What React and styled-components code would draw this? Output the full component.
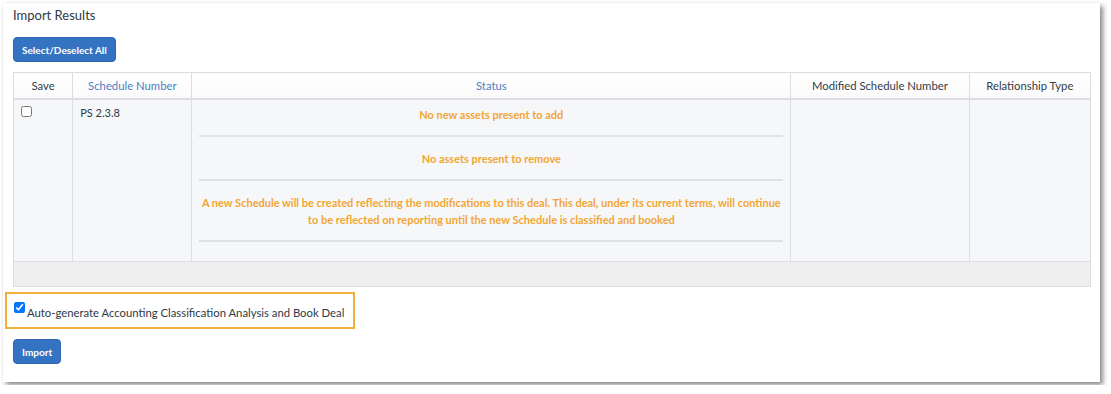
import React, { useState } from "react";
import styled, { createGlobalStyle } from "styled-components";

const GlobalStyle = createGlobalStyle`
    body {
        margin: 0;
        background: #ffffff;
        font-family: Lato, "Open Sans", Arial, sans-serif;
        color: #333d47;
    }
`;

const Card = styled.section`
    margin: 3px;
    width: 1097px;
    height: 379px;
    box-sizing: border-box;
    padding: 3px 9px 0 10px;
    background: #ffffff;
    box-shadow: 3px 3px 5px rgba(0, 0, 0, 0.45), 0 0 2px rgba(0, 0, 0, 0.08);
`;

const Title = styled.h3`
    margin: 0;
    font-size: 13px;
    font-weight: 400;
    line-height: 18px;
    color: #2e3a46;
`;

const Button = styled.button`
    display: block;
    height: 25px;
    padding: 0 8px;
    margin-top: ${(p) => p.$top}px;
    border: 1px solid #2b66b1;
    border-radius: 4px;
    background: #3473c2;
    color: #ffffff;
    font-family: Lato, Arial, sans-serif;
    font-size: 10px;
    font-weight: 700;
    cursor: pointer;
`;

const Table = styled.table`
    margin-top: 10px;
    width: 1078px;
    border-collapse: collapse;
    border: 1px solid #dcdee1;
    font-size: 11px;
`;

const Th = styled.th`
    height: 25px;
    padding: 0 6px;
    border: 1px solid #dcdee1;
    border-bottom-width: 2px;
    background: linear-gradient(#ffffff, #fafafa);
    font-size: 11.3px;
    font-weight: 400;
    text-align: center;
    color: ${(p) => (p.$link ? "#4a7fc3" : "#333d47")};
`;

const Td = styled.td`
    vertical-align: top;
    padding: 4px 6px;
    border: 1px solid #dcdee1;
    background: #f6f7f9;
    line-height: 17px;
`;

const StatusCell = styled(Td)`
    padding: 6px 7px 19px;
`;

const FooterCell = styled.td`
    height: 24px;
    padding: 0;
    background: #efefef;
    border: 1px solid #dcdee1;
`;

const StatusItem = styled.div`
    padding: ${(p) => (p.$first ? "0" : "13px")} 0 12px;
    border-bottom: 2px solid #dfe1e4;
    text-align: center;
    color: #f2a635;
    font-size: 11px;
    font-weight: 700;
    line-height: 17px;
`;

const RowCheck = styled.input`
    margin: 1px 0 0 1px;
    width: 11px;
    height: 11px;
`;

const NumberText = styled.div`
    padding-left: 1px;
    color: #2e3a46;
`;

const AutoBox = styled.label`
    display: flex;
    align-items: flex-start;
    gap: 2px;
    box-sizing: border-box;
    width: 350px;
    height: 37px;
    margin: 5px 0 0 -8px;
    padding: 7px 7px;
    border: 2px solid #f0b03a;
    font-size: 11.3px;
    line-height: 18px;
    white-space: nowrap;
    color: #2e3a46;
    cursor: pointer;

    input {
        margin: 1px 0 0;
        width: 11px;
        height: 11px;
    }
    span {
        margin-top: 3px;
    }
`;

const columns = [
    { label: "Save", width: 59 },
    { label: "Schedule Number", width: 119, link: true },
    { label: "Status", width: 597, link: true },
    { label: "Modified Schedule Number", width: 178 },
    { label: "Relationship Type", width: 121 },
];

const statuses = [
    "No new assets present to add",
    "No assets present to remove",
    "A new Schedule will be created reflecting the modifications to this deal. This deal, under its current terms, will continue to be reflected on reporting until the new Schedule is classified and booked",
];

export default function App() {
    const [save, setSave] = useState(false);
    const [auto, setAuto] = useState(true);

    return (
        <>
            <GlobalStyle />
            <Card>
                <Title>Import Results</Title>
                <Button $top={13} onClick={() => setSave(!save)}>
                    Select/Deselect All
                </Button>
                <Table>
                    <colgroup>
                        {columns.map((c) => (
                            <col key={c.label} style={{ width: c.width }} />
                        ))}
                    </colgroup>
                    <thead>
                        <tr>
                            {columns.map((c) => (
                                <Th key={c.label} $link={c.link}>
                                    {c.label}
                                </Th>
                            ))}
                        </tr>
                    </thead>
                    <tbody>
                        <tr>
                            <Td>
                                <RowCheck
                                    type="checkbox"
                                    checked={save}
                                    onChange={(e) => setSave(e.target.checked)}
                                />
                            </Td>
                            <Td>
                                <NumberText>PS 2.3.8</NumberText>
                            </Td>
                            <StatusCell>
                                {statuses.map((s, i) => (
                                    <StatusItem key={i} $first={i === 0}>
                                        {s}
                                    </StatusItem>
                                ))}
                            </StatusCell>
                            <Td />
                            <Td />
                        </tr>
                        <tr>
                            <FooterCell colSpan={5} />
                        </tr>
                    </tbody>
                </Table>
                <AutoBox>
                    <input
                        type="checkbox"
                        checked={auto}
                        onChange={(e) => setAuto(e.target.checked)}
                    />
                    <span>Auto-generate Accounting Classification Analysis and Book Deal</span>
                </AutoBox>
                <Button $top={10}>Import</Button>
            </Card>
        </>
    );
}
